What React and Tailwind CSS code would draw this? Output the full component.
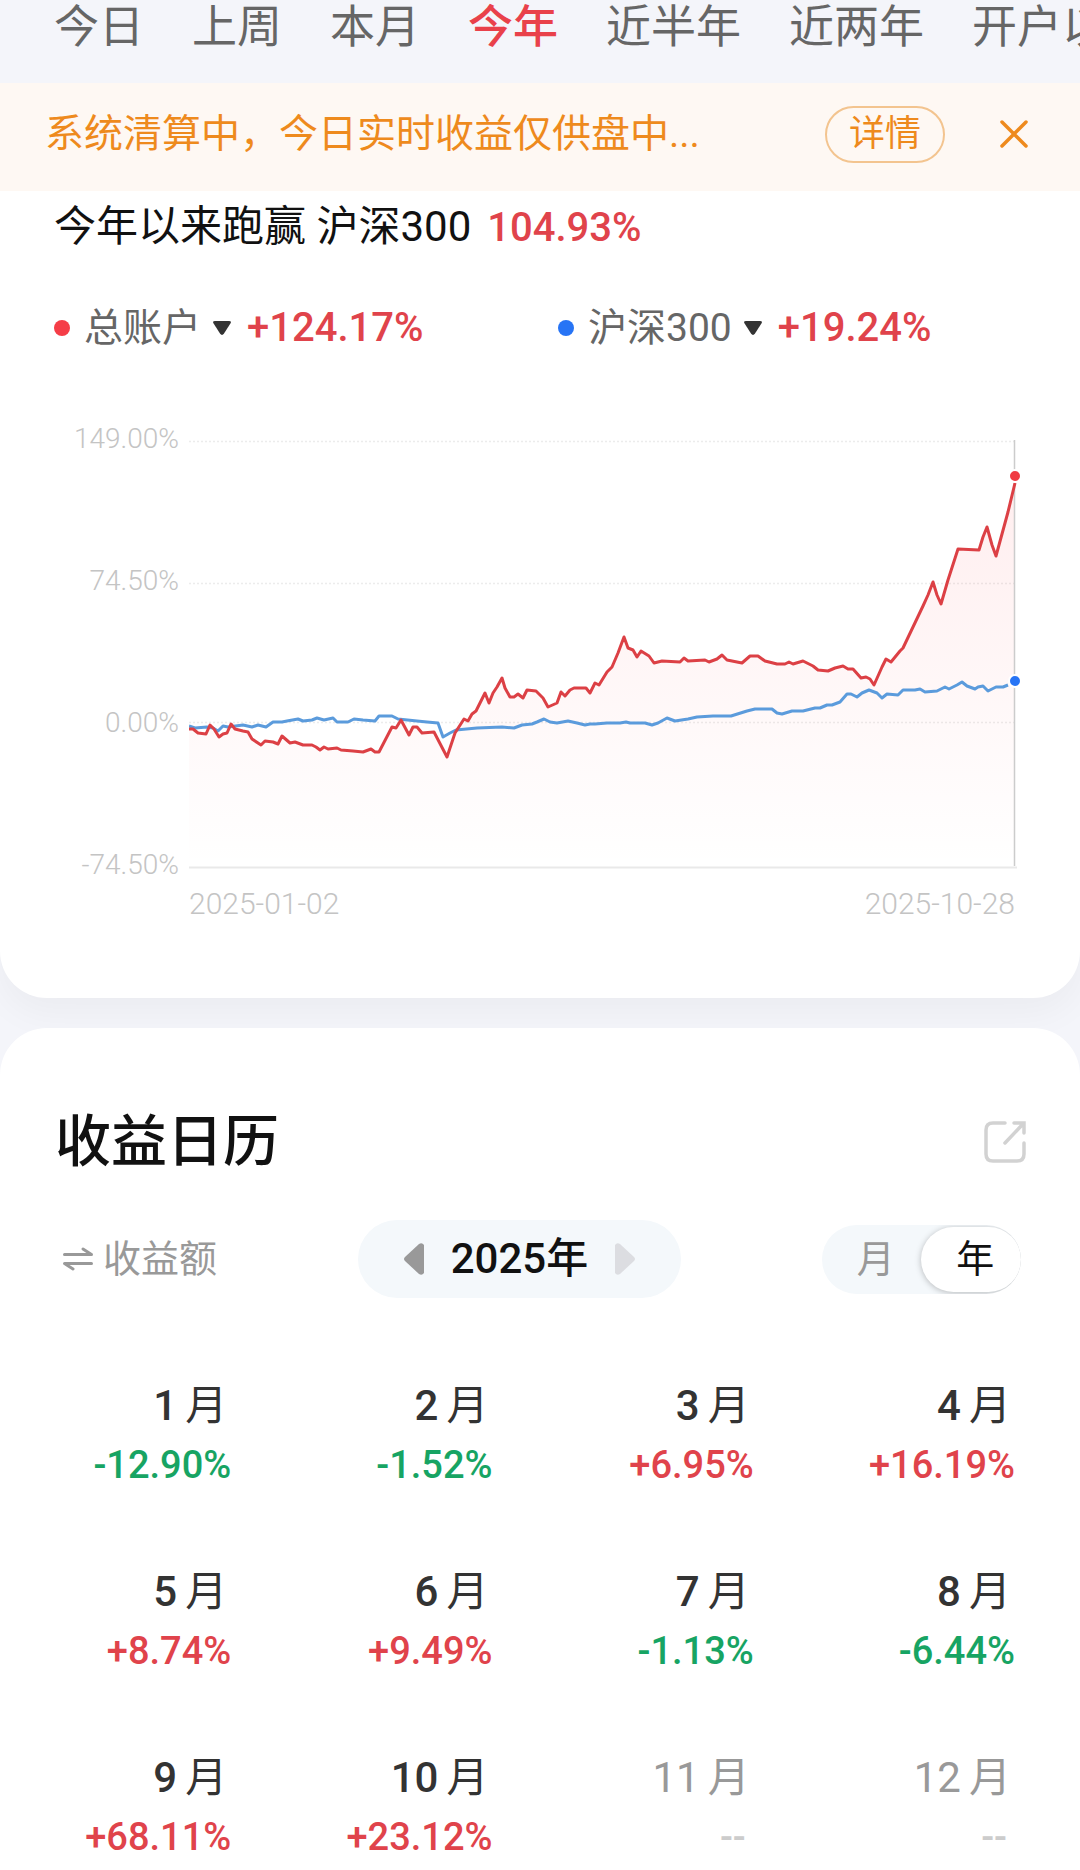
import { useState } from 'react';

const tabs = ['今日', '上周', '本月', '今年', '近半年', '近两年', '开户以来'];

const months = [
  { name: '1', value: '-12.90%' },
  { name: '2', value: '-1.52%' },
  { name: '3', value: '+6.95%' },
  { name: '4', value: '+16.19%' },
  { name: '5', value: '+8.74%' },
  { name: '6', value: '+9.49%' },
  { name: '7', value: '-1.13%' },
  { name: '8', value: '-6.44%' },
  { name: '9', value: '+68.11%' },
  { name: '10', value: '+23.12%' },
  { name: '11', value: null },
  { name: '12', value: null },
];

const accountLine =
  '0,293 4,293 9,297 17,298 21,289 25,293 30,301 34,298 38,297 42,288 46,293 54,295 59,296 63,303 72,309 76,305 84,306 89,308 93,300 101,307 106,306 114,309 123,309 127,311 131,314 135,311 139,313 148,312 152,314 164,315 174,316 182,313 186,316 190,316 203,291 207,292 212,284 220,299 224,291 228,291 233,297 245,296 258,321 266,297 275,283 279,285 283,278 287,275 296,257 300,267 304,257 308,251 313,242 316,252 321,261 325,261 329,258 334,262 338,254 347,255 354,262 359,271 368,267 372,256 376,260 381,254 385,252 397,252 401,257 406,247 410,249 418,236 423,231 429,217 435,201 439,212 444,214 448,221 452,215 460,220 465,227 473,225 491,226 495,222 499,225 516,224 520,226 528,223 533,219 538,224 553,227 561,220 569,220 576,225 588,228 596,228 600,226 604,228 614,225 624,230 629,234 639,235 646,232 654,230 659,233 664,233 672,242 677,241 681,243 685,249 693,231 697,223 702,226 711,215 714,212 724,191 734,170 739,159 744,146 748,159 752,168 759,144 769,113 790,114 794,101 798,91 803,109 807,120 819,76 826,47';

const indexLine =
  '0,290 6,292 18,291 24,292 29,295 34,290 39,291 54,289 63,291 69,289 77,291 84,286 93,286 98,285 109,283 114,285 123,284 128,282 135,284 144,282 148,286 159,286 165,283 174,284 186,285 190,280 203,280 209,283 228,285 238,286 249,287 254,301 261,297 267,294 288,292 313,291 325,292 333,289 343,288 348,286 355,283 361,286 368,287 379,285 388,287 396,289 401,288 406,288 418,287 431,287 437,286 441,287 456,287 463,289 469,287 478,282 486,285 499,283 508,281 524,280 542,280 558,275 566,273 583,273 588,277 593,278 603,275 614,275 626,272 631,272 638,269 643,269 651,266 658,258 662,258 668,261 673,257 680,254 688,257 693,262 698,258 709,259 714,254 726,254 731,253 736,256 748,255 756,251 760,253 768,249 773,246 778,250 786,253 789,251 794,250 799,255 807,251 814,251 819,249';

const Tabs = ({ active, onChange }) => (
  <nav className="flex h-[83px] items-start gap-12 overflow-hidden pl-[54px] pt-[3px]">
    {tabs.map((tab) => (
      <button
        key={tab}
        type="button"
        onClick={() => onChange(tab)}
        className={`shrink-0 whitespace-nowrap text-[45px] leading-[50px] ${tab === active ? 'font-medium text-[#e9414a]' : 'text-[#666666]'}`}
      >
        {tab}
      </button>
    ))}
  </nav>
);

const Notice = () => (
  <div className="relative flex h-[108px] items-center bg-[#fef8f3] pb-1.5 pl-[45px] pr-[51px] text-[#ee8a1d]">
    <p className="flex-1 truncate text-[39px] leading-[48px]">系统清算中，今日实时收益仅供盘中...</p>
    <button type="button" className="h-[57px] w-[120px] shrink-0 rounded-full border-2 border-[#f3c48f] text-4xl leading-none">
      详情
    </button>
    <button type="button" aria-label="关闭" className="ml-[54px] shrink-0">
      <svg className="size-[30px]" viewBox="0 0 30 30" fill="none" stroke="currentColor" strokeWidth="3.500" strokeLinecap="round">
        <path d="M3 3l24 24M27 3L3 27" />
      </svg>
    </button>
  </div>
);

const LegendItem = ({ dot, name, value }) => (
  <div className="flex flex-1 items-center">
    <span className={`size-4 shrink-0 rounded-full ${dot}`} />
    <button type="button" className="ml-3.5 flex items-center gap-3 whitespace-nowrap text-[39px] leading-[48px] text-[#666666]">
      {name}
      <svg className="w-[18px] h-[14px]" viewBox="0 0 18 14" fill="#333333">
        <path d="M2 0h14q3 0 1.4 2.6L11 12.6q-2 2.6-4 0L.6 2.6Q-1 0 2 0z" />
      </svg>
    </button>
    <span className="ml-4 text-[40px] font-medium leading-[48px] text-[#e0434b]">{value}</span>
  </div>
);

const Chart = () => (
  <div className="mt-[73px] pl-[54px] pr-[59px]">
    <div className="flex gap-2.5">
      <div className="flex w-[125px] shrink-0 flex-col justify-between text-right text-[28px] font-light leading-7 text-[#c4c4c4]">
        <span>149.00%</span>
        <span>74.50%</span>
        <span>0.00%</span>
        <span>-74.50%</span>
      </div>
      <div className="min-w-0 flex-1 pb-[7px] pt-[11px]">
        <svg className="block h-auto w-full" viewBox="0 0 832 436" fill="none">
          <defs>
            <linearGradient id="area" x1="0" y1="40" x2="0" y2="431" gradientUnits="userSpaceOnUse">
              <stop offset="0" stopColor="#ff4048" stopOpacity="0.09" />
              <stop offset="1" stopColor="#ff4048" stopOpacity="0" />
            </linearGradient>
          </defs>
          <g stroke="#ececec" strokeWidth="1.5" strokeDasharray="2 2">
            <path d="M0 5.5H825" />
            <path d="M0 147.5H825" />
            <path d="M0 286.5H825" />
          </g>
          <path d="M0 431.5H828" stroke="#e9e9e9" strokeWidth="2" />
          <polygon points={`0,431 ${accountLine} 826,431`} fill="url(#area)" />
          <path d="M825.5 4V430" stroke="#cccccc" strokeWidth="1.5" />
          <polyline points={indexLine} stroke="#5b9bdc" strokeWidth="3" strokeLinejoin="round" />
          <polyline points={accountLine} stroke="#dc4045" strokeWidth="3" strokeLinejoin="round" />
          <circle cx="826" cy="40" r="6" fill="#f03a42" stroke="#fff" strokeWidth="2" />
          <circle cx="826" cy="245" r="6" fill="#2774f5" stroke="#fff" strokeWidth="2" />
        </svg>
      </div>
    </div>
    <div className="mt-[9px] flex justify-between pl-[135px] pr-1.5 text-[30px] font-light leading-8 text-[#c4c4c4]">
      <span>2025-01-02</span>
      <span>2025-10-28</span>
    </div>
  </div>
);

const YearPicker = () => (
  <div className="flex h-[78px] w-[323px] items-center justify-between rounded-full bg-[#f4f8fb] px-[46px]">
    <button type="button" aria-label="上一年">
      <svg className="h-8 w-5" viewBox="0 0 20 32" fill="#999999">
        <path d="M20 2v28q-2 3-5 1L1 18q-2-2 0-4L15 1q3-2 5 1z" />
      </svg>
    </button>
    <span className="text-[42px] font-medium leading-[48px] text-[#111111]">2025年</span>
    <button type="button" aria-label="下一年">
      <svg className="h-8 w-5" viewBox="0 0 20 32" fill="#dcdde1">
        <path d="M0 2v28q2 3 5 1l14-13q2-2 0-4L5 1Q2-1 0 2z" />
      </svg>
    </button>
  </div>
);

const PeriodToggle = ({ value, onChange }) => (
  <div className="flex h-[69px] w-[199px] items-center overflow-hidden rounded-full bg-[#f4f8fb]">
    {['月', '年'].map((item) => (
      <button
        key={item}
        type="button"
        aria-pressed={item === value}
        onClick={() => onChange(item)}
        className={`h-[65px] flex-1 rounded-full pl-2 text-[38px] leading-none ${item === value ? 'bg-white text-[#111111] shadow-[0_1px_6px_rgba(0,0,0,0.25)]' : 'text-[#999999]'}`}
      >
        {item}
      </button>
    ))}
  </div>
);

const valueColor = (value) => {
  if (!value) return 'text-[#cccccc]';
  return value.startsWith('-') ? 'text-[#17a463]' : 'text-[#e0434b]';
};

const Month = ({ name, value }) => (
  <div className="flex flex-col items-end">
    <div className={`flex gap-2 pr-1 text-[42px] leading-[48px] ${value ? 'text-[#333333]' : 'text-[#999999]'}`}>
      <span className={value ? 'font-medium' : ''}>{name}</span>
      <span>月</span>
    </div>
    <div className={`mt-[13px] text-[38px] font-medium leading-[44px] ${valueColor(value)} ${value ? '' : 'pr-2'}`}>
      {value ?? '--'}
    </div>
  </div>
);

export default function App() {
  const [tab, setTab] = useState('今年');
  const [period, setPeriod] = useState('年');

  return (
    <div className="overflow-hidden bg-[#f4f5fa] font-['Roboto','Noto_Sans_CJK_SC',sans-serif]">
      <Tabs active={tab} onChange={setTab} />
      <Notice />

      <section className="rounded-b-[47px] bg-white pb-[78px] pt-3 shadow-[0_16px_36px_rgba(0,0,0,0.04)]">
        <h2 className="px-[54px] text-[42px] leading-[48px] text-[#111111]">
          今年以来跑赢 沪深300
          <span className="ml-4 text-[40px] font-medium text-[#e0434b]">104.93%</span>
        </h2>
        <div className="mt-[52px] flex pl-[54px] pr-[18px]">
          <LegendItem dot="bg-[#f53d47]" name="总账户" value="+124.17%" />
          <LegendItem dot="bg-[#2774f5]" name="沪深300" value="+19.24%" />
        </div>
        <Chart />
      </section>

      <section className="relative mt-[30px] rounded-t-[47px] bg-white pb-3 pt-[82px]">
        <div className="flex items-center justify-between pl-[55px] pr-[53px]">
          <h2 className="text-[56px] font-medium leading-[64px] text-[#111111]">收益日历</h2>
          <button type="button" aria-label="分享">
            <svg className="size-[44px]" viewBox="0 0 44 44" fill="none" stroke="#d2d2d2" strokeWidth="3.5" strokeLinecap="round">
              <path d="M22 3H10Q3 3 3 10v24q0 7 7 7h24q7 0 7-7V23" />
              <path d="M31 3h10v10M40 4L22 23" />
            </svg>
          </button>
        </div>

        <div className="mt-[46px] flex items-center justify-between pl-[63px] pr-[59px]">
          <button type="button" className="flex items-center gap-2.5 text-[38px] leading-[48px] text-[#999999]">
            <svg className="h-6 w-[30px]" viewBox="0 0 30 24" fill="none" stroke="currentColor" strokeWidth="3" strokeLinecap="round" strokeLinejoin="round">
              <path d="M1.5 7.5h27L20 2M28.5 16.5h-27L10 22" />
            </svg>
            收益额
          </button>
          <YearPicker />
          <PeriodToggle value={period} onChange={setPeriod} />
        </div>

        <div className="mt-[84px] grid grid-cols-4 gap-x-[84px] gap-y-[81px] pl-[54px] pr-[65px]">
          {months.map((month) => (
            <Month key={month.name} {...month} />
          ))}
        </div>
      </section>
    </div>
  );
}
